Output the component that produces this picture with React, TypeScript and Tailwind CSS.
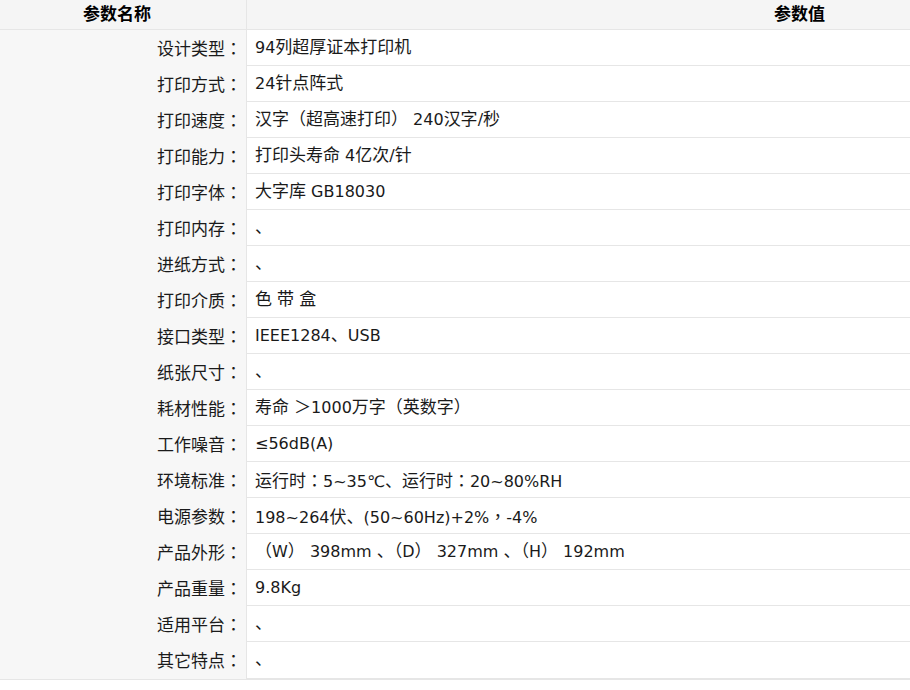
const specs: [string, string][] = [
  ["设计类型：", "94列超厚证本打印机"],
  ["打印方式：", "24针点阵式"],
  ["打印速度：", "汉字（超高速打印） 240汉字/秒"],
  ["打印能力：", "打印头寿命 4亿次/针"],
  ["打印字体：", "大字库 GB18030"],
  ["打印内存：", "、"],
  ["进纸方式：", "、"],
  ["打印介质：", "色 带 盒"],
  ["接口类型：", "IEEE1284、USB"],
  ["纸张尺寸：", "、"],
  ["耗材性能：", "寿命 ＞1000万字（英数字）"],
  ["工作噪音：", "≤56dB(A)"],
  ["环境标准：", "运行时：5~35℃、运行时：20~80%RH"],
  ["电源参数：", "198~264伏、(50~60Hz)+2%，-4%"],
  ["产品外形：", "（W） 398mm 、（D） 327mm 、（H） 192mm"],
  ["产品重量：", "9.8Kg"],
  ["适用平台：", "、"],
  ["其它特点：", "、"],
];

// CJK runs are a touch larger than the latin ones in the reference;
// full-width colon / comma sit centred
const Text = ({ s }: { s: string }) => (
  <>
    {s.split(/([\u3000-\u9fff\uff00-\uffef]+)/).map((part, i) => {
      if (!part) return null;
      if (/[\u3000-\u9fff\uff00-\uffef]/.test(part)) {
        return (
          <span key={i} className="text-[17px]">
            {part.split(/([：，])/).map((p, j) =>
              p === "：" || p === "，" ? (
                <span key={j} style={{ fontFamily: '"Noto Sans CJK TC", sans-serif' }}>
                  {p}
                </span>
              ) : (
                p
              )
            )}
          </span>
        );
      }
      return (
        <span key={i} className="text-[16px]">
          {part}
        </span>
      );
    })}
  </>
);

export default function App() {
  return (
    <div
      className="w-[910px] h-[690px] bg-white overflow-hidden text-[16px] text-[#1a1a1a]"
      style={{ fontFamily: '"DejaVu Sans", "Noto Sans CJK SC", sans-serif' }}
    >
      <div className="border-b-2 border-[#e6e6e6]">
        {/* header */}
        <div className="grid grid-cols-[247px_1fr] h-[30px] bg-[#f5f5f5] border-b border-[#e6e6e6] font-bold text-black leading-[28px] text-[17px]">
          <div className="pl-[83px] border-r border-[#e6e6e6]">参数名称</div>
          <div className="pl-[527px]">参数值</div>
        </div>
        {specs.map(([name, value], i) => (
          <div
            key={i}
            className={
              "grid grid-cols-[247px_1fr] h-[36px] leading-[35px] " +
              (i < specs.length - 1 ? "border-b border-[#e6e6e6]" : "")
            }
          >
            <div className="bg-[#f7f7f7] text-right pr-[4px] border-r border-[#e6e6e6]">
              <Text s={name} />
            </div>
            <div className="pl-[8px] whitespace-nowrap">
              <Text s={value} />
            </div>
          </div>
        ))}
      </div>
    </div>
  );
}
